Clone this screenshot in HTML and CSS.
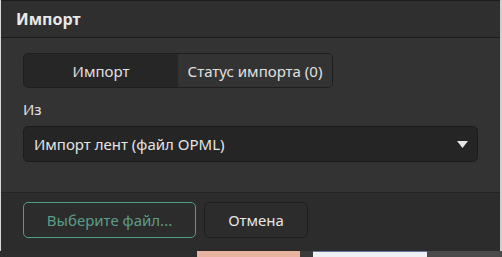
FILE: index.html
```html
<!DOCTYPE html>
<html lang="ru">
<head>
<meta charset="utf-8">
<link rel="stylesheet" href="styles.css">
</head>
<body>
<div class="screen">
  <div class="dialog">
    <div class="dialog-header">Импорт</div>
    <div class="dialog-body">
      <div class="tabs">
        <div class="tab tab-active">Импорт</div>
        <div class="tab">Статус импорта (0)</div>
      </div>
      <div class="field-label">Из</div>
      <div class="select">
        <span class="select-text">Импорт лент (файл OPML)</span>
        <svg class="select-arrow" width="11" height="7" viewBox="0 0 11 7"><path d="M0 0H11L5.5 7Z" fill="#e6e6e6"/></svg>
      </div>
    </div>
    <div class="dialog-footer">
      <button class="btn btn-primary">Выберите файл...</button>
      <button class="btn">Отмена</button>
    </div>
  </div>
  <div class="backdrop-strip">
    <div class="bg-a"></div>
    <div class="bg-b"></div>
    <div class="bg-c"></div>
    <div class="bg-d"></div>
    <div class="bg-e"></div>
  </div>
</div>
</body>
</html>
```
FILE: styles.css
```css
* { box-sizing: border-box; }
html, body {
  margin: 0;
  padding: 0;
  width: 502px;
  height: 257px;
  overflow: hidden;
  background: #2a2a2a;
  font-family: "Noto Sans", "Open Sans", sans-serif;
}
.screen {
  display: flex;
  flex-direction: column;
  height: 257px;
  background: linear-gradient(to right, #d8d8d8 0, #d8d8d8 1px, #2a2a2a 1px, #2a2a2a 500px, #cfcfcf 500px);
}
.dialog {
  margin-left: 1px;
  width: 499px;
  height: 251px;
  background: #333333;
  border-top: 1px solid #1e1e1e;
  display: flex;
  flex-direction: column;
}
.dialog-header {
  height: 37px;
  border-bottom: 1px solid #1c1c1c;
  background: #2f2f2f;
  color: #e8e8e8;
  font-weight: 700;
  font-size: 16px;
  padding-left: 15px;
  display: flex;
  align-items: center;
}
.dialog-body {
  padding: 15px 23px 0 22px;
  height: 155px;
  border-bottom: 1px solid #232323;
}
.tabs {
  display: flex;
  width: 310px;
  height: 35px;
  border: 1px solid #1e1e1e;
  border-radius: 5px;
  overflow: hidden;
}
.tab {
  flex: 1;
  display: flex;
  align-items: center;
  justify-content: center;
  color: #e0e0e0;
  font-size: 15px;
  background: #333333;
}
.tab-active {
  background: #262626;
}
.field-label {
  margin-top: 12px;
  color: #e0e0e0;
  font-size: 15px;
  line-height: 18px;
}
.select {
  margin-top: 8px;
  height: 36px;
  width: 455px;
  background: #252525;
  border: 1px solid #1c1c1c;
  border-radius: 5px;
  display: flex;
  align-items: center;
  justify-content: space-between;
  padding: 0 9px 0 10px;
}
.select-text {
  color: #e4e4e4;
  font-size: 15px;
}
.dialog-footer {
  flex: 1;
  background: #2c2c2c;
  display: flex;
  align-items: flex-start;
  gap: 8px;
  padding: 9px 22px 0 22px;
}
.btn {
  height: 36px;
  border-radius: 5px;
  border: 1px solid #1e1e1e;
  background: #2c2c2c;
  color: #e6e6e6;
  font-family: inherit;
  font-size: 15px;
  padding: 0 16px;
  width: 104px;
}
.btn-primary {
  width: 173px;
  border-color: #4e9d89;
  color: #5a9d8a;
}
.backdrop-strip {
  flex: 1;
  display: flex;
}
.bg-a { width: 197px; background: #2d2d2d; }
.bg-b { width: 103px; background: #e8b4a0; }
.bg-c { width: 13px; background: #3a3a3a; }
.bg-d { width: 114px; background: #eef0f4; border-top: 1px solid #6a78a0; }
.bg-e { flex: 1; background: #4a4a4a; }
```
